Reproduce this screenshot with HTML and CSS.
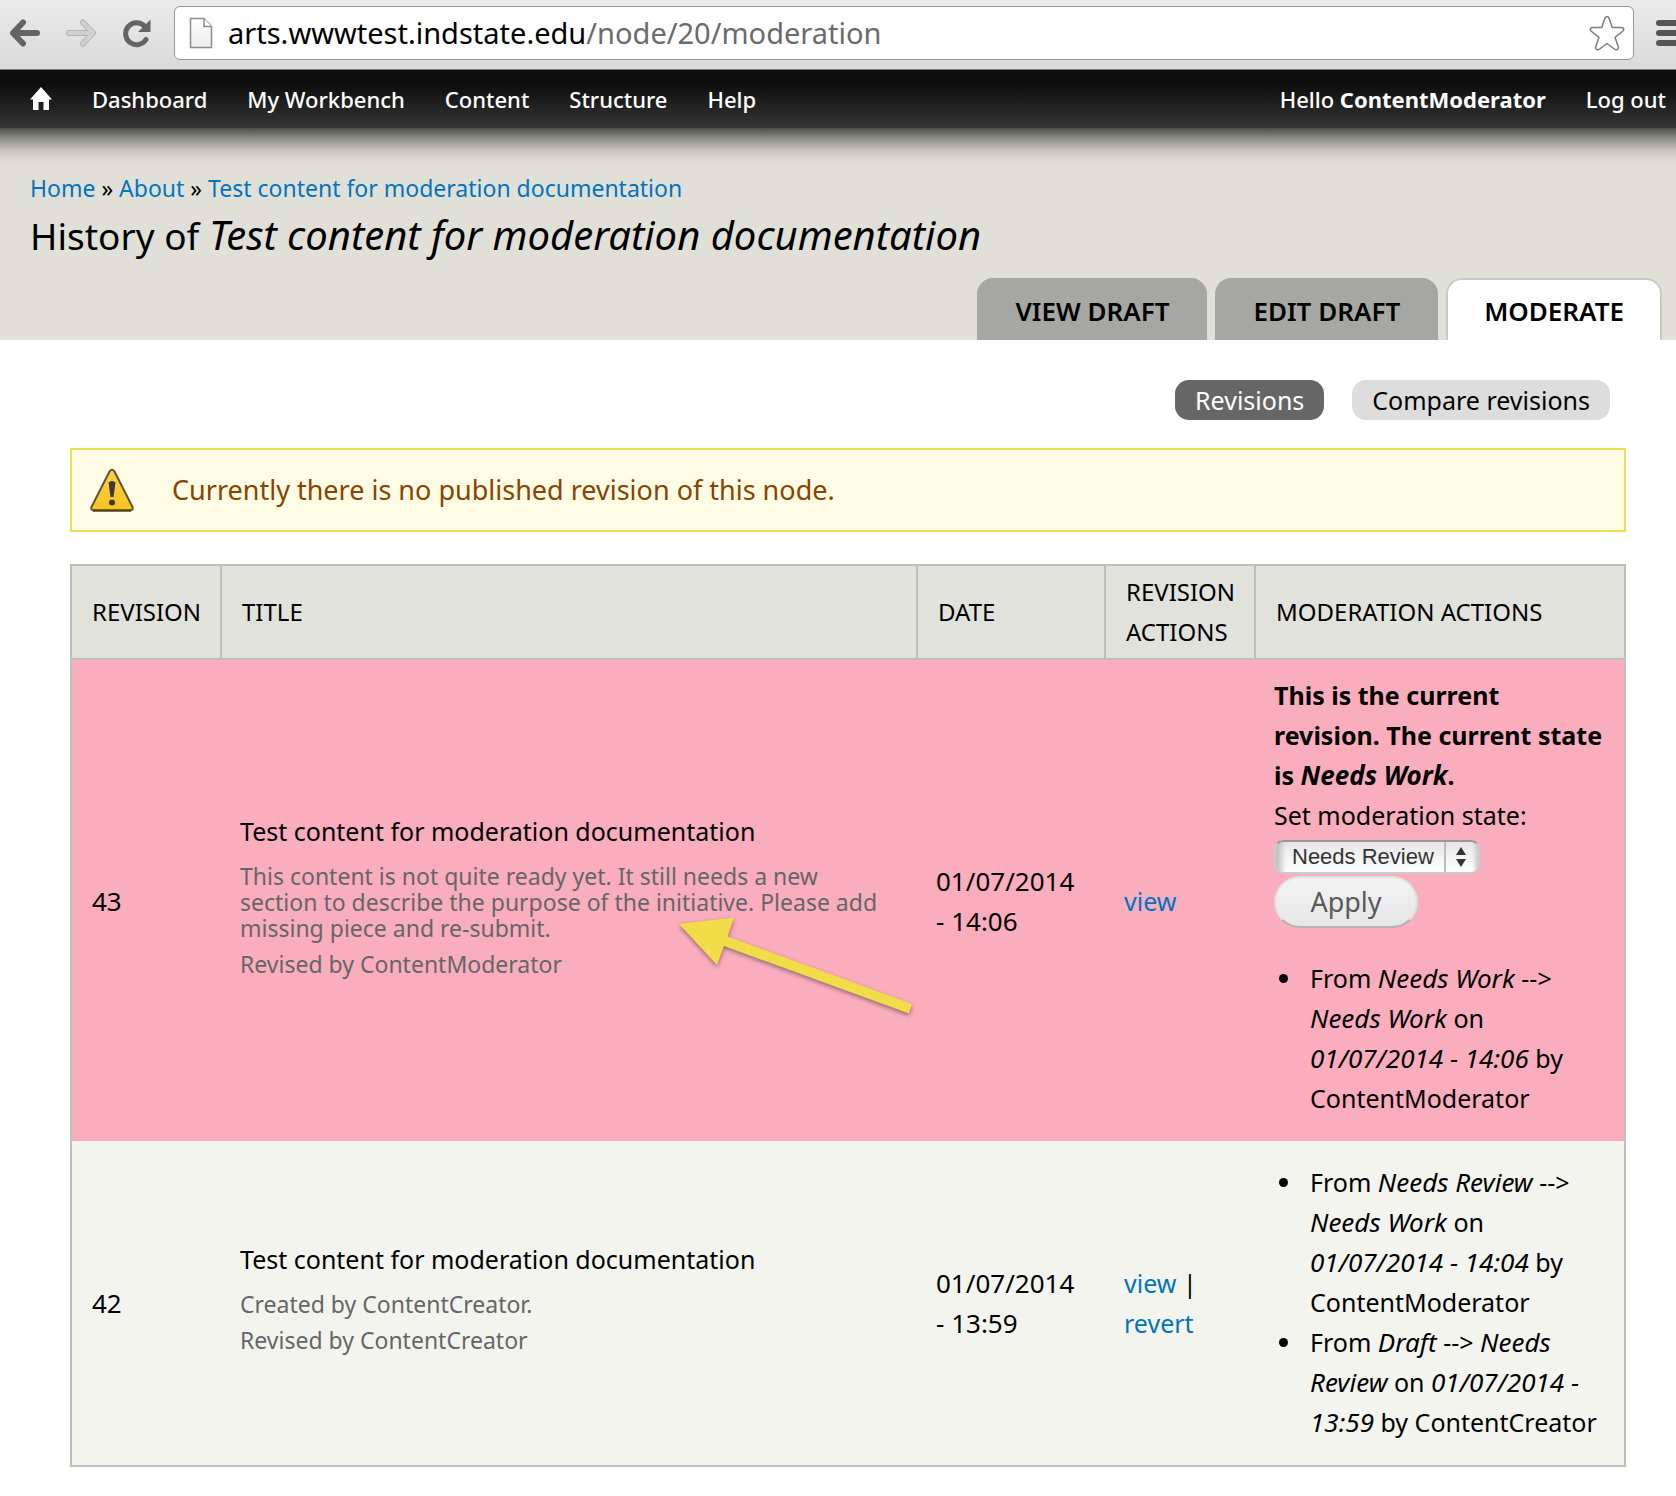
FILE: index.html
```html
<!DOCTYPE html>
<html lang="en">
<head>
<meta charset="utf-8">
<meta name="viewport" content="width=device-width, initial-scale=1">
<title>History of Test content for moderation documentation</title>
<link rel="stylesheet" href="styles.css">
</head>
<body>
<div class="browser">
  <button class="browser-btn" type="button" aria-label="Back">
    <svg width="32" height="30" viewBox="0 0 32 30" fill="none" stroke="#646464" stroke-width="6" stroke-linecap="round" stroke-linejoin="round"><path d="M28 15H6M14 4.500L4 15l10 10.500"/></svg>
  </button>
  <button class="browser-btn" type="button" aria-label="Forward" disabled>
    <svg width="32" height="30" viewBox="0 0 32 30" fill="none" stroke-linecap="round" stroke-linejoin="round"><path stroke="#b4b4b4" stroke-width="6" d="M4 15h22M18 4.500L28 15 18 25.500"/><path stroke="#d0d0d0" stroke-width="4" d="M4 15h22M18 4.500L28 15 18 25.500"/></svg>
  </button>
  <button class="browser-btn" type="button" aria-label="Reload">
    <svg width="32" height="30" viewBox="0 0 32 30"><path fill="none" stroke="#646464" stroke-width="5" stroke-linecap="round" d="M25 21.500A11 11 0 1 1 23.500 8"/><path fill="#646464" d="M29.500 1.500V14H17z"/></svg>
  </button>
  <div class="address">
    <svg width="24" height="32" viewBox="0 0 24 32" aria-hidden="true"><defs><linearGradient id="sheet" x1="0" y1="0" x2="0" y2="1"><stop offset="0" stop-color="#fff"/><stop offset="1" stop-color="#ececec"/></linearGradient></defs><path fill="url(#sheet)" stroke="#8c8c8c" stroke-width="1.500" d="M1.500 1.500H15L22.500 9.500V30.500H1.500z"/><path fill="#fff" stroke="#8c8c8c" stroke-width="1.500" d="M15 1.500V9.500H22.500"/></svg>
    <div class="url" role="textbox" contenteditable="true" spellcheck="false" aria-label="Address">arts.wwwtest.indstate.edu<span class="url-path">/node/20/moderation</span></div>
    <button class="browser-btn" type="button" aria-label="Bookmark this page">
      <svg width="36" height="36" viewBox="0 0 36 36" fill="#fff" stroke="#7d7d7d" stroke-width="1.500" stroke-linejoin="round"><path d="M16 3Q18 0 20 3L23.300 12.500H33Q36 13.500 34 16L26 22.300 29.500 32.500Q29 35.500 26 34.500L18 28.500 10 34.500Q7 35.500 6.500 32.500L10 22.300 2 16Q0 13.500 3 12.500H12.700z"/></svg>
    </button>
  </div>
  <button class="browser-btn menu-btn" type="button" aria-label="Menu">
    <svg width="34" height="28" viewBox="0 0 34 28" fill="#555"><rect width="34" height="6" y="1" rx="3"/><rect width="34" height="6" y="11" rx="3"/><rect width="34" height="6" y="21" rx="3"/></svg>
  </button>
</div>

<nav class="admin" aria-label="Administration">
  <ul class="admin-menu">
    <li><a href="#" aria-label="Home"><svg width="22" height="24" viewBox="0 0 22 24" fill="#fff"><path d="M11 0l11 12.500h-3V23h-5.500v-8h-5v8H3V12.500H0z"/></svg></a></li>
    <li><a href="#">Dashboard</a></li>
    <li><a href="#">My Workbench</a></li>
    <li><a href="#">Content</a></li>
    <li><a href="#">Structure</a></li>
    <li><a href="#">Help</a></li>
  </ul>
  <ul class="admin-menu">
    <li><a href="#">Hello <strong>ContentModerator</strong></a></li>
    <li><a href="#">Log out</a></li>
  </ul>
</nav>

<header class="branding">
  <div class="breadcrumb"><a href="#">Home</a> » <a href="#">About</a> » <a href="#">Test content for moderation documentation</a></div>
  <h1>History of <em>Test content for moderation documentation</em></h1>
  <ul class="tabs">
    <li><a href="#">VIEW DRAFT</a></li>
    <li><a href="#">EDIT DRAFT</a></li>
    <li><a class="active" href="#">MODERATE</a></li>
  </ul>
</header>

<main class="page">
  <ul class="pills">
    <li><a class="active" href="#">Revisions</a></li>
    <li><a href="#">Compare revisions</a></li>
  </ul>

  <div class="warning" role="status">
    <svg width="44" height="44" viewBox="0 0 44 44" aria-hidden="true"><defs><linearGradient id="sign" x1="0" y1="0" x2="0" y2="1"><stop offset="0" stop-color="#f7d04e"/><stop offset="1" stop-color="#fbc21c"/></linearGradient></defs><path fill="url(#sign)" stroke="#5f5638" stroke-width="2" stroke-linejoin="round" d="M19.500 3.500Q22 0 24.500 3.500L42.500 39Q43.500 42 40.500 42.500H3.500Q.5 42 1.500 39z"/><path stroke="#4b4217" stroke-width="2" d="M3 42.500h38"/><path fill="#3c3a2c" d="M18.500 14.500Q22 11.500 25.500 14.500L23.500 29h-3z"/><circle cx="22" cy="34.500" r="3" fill="#3c3a2c"/></svg>
    <span>Currently there is no published revision of this node.</span>
  </div>

  <table class="revisions">
    <colgroup><col class="col-id"><col><col class="col-date"><col class="col-actions"><col class="col-moderation"></colgroup>
    <thead>
      <tr><th scope="col">REVISION</th><th scope="col">TITLE</th><th scope="col">DATE</th><th scope="col">REVISION ACTIONS</th><th scope="col">MODERATION ACTIONS</th></tr>
    </thead>
    <tbody>
      <tr class="current">
        <td class="number">43</td>
        <td>
          <div class="entry">
            <div>Test content for moderation documentation</div>
            <p>This content is not quite ready yet. It still needs a new section to describe the purpose of the initiative. Please add missing piece and re-submit.</p>
            <p>Revised by ContentModerator</p>
            <svg class="pointer" width="240" height="104" viewBox="0 0 240 104" aria-hidden="true"><path fill="#f2dd48" d="M3 9L58 2.500 51.500 21.500 236 89 233 98.500 48 31 41 50z"/></svg>
          </div>
        </td>
        <td class="date">01/07/2014 <span class="time">- 14:06</span></td>
        <td><a href="#">view</a></td>
        <td>
          <strong>This is the current revision. The current state is <em>Needs Work</em>.</strong>
          <form class="state-form">
            <label for="state">Set moderation state:</label>
            <span class="select">
              <select id="state"><option>Needs Review</option><option>Draft</option><option>Published</option></select>
              <svg width="36" height="34" viewBox="0 0 36 34" aria-hidden="true"><path stroke="#bdbdbd" stroke-width="2" d="M1 2v30"/><path fill="#333" d="M12 15l5-8 5 8zM12 19l5 8 5-8z"/></svg>
            </span>
            <button class="apply" type="button">Apply</button>
          </form>
          <ul class="log">
            <li>From <em>Needs Work</em> --&gt; <em>Needs Work</em> on <em>01/07/2014 - 14:06</em> by ContentModerator</li>
          </ul>
        </td>
      </tr>
      <tr>
        <td class="number">42</td>
        <td>
          <div class="entry">
            <div>Test content for moderation documentation</div>
            <p>Created by ContentCreator.</p>
            <p>Revised by ContentCreator</p>
          </div>
        </td>
        <td class="date">01/07/2014 <span class="time">- 13:59</span></td>
        <td><a href="#">view</a> | <a href="#">revert</a></td>
        <td>
          <ul class="log">
            <li>From <em>Needs Review</em> --&gt; <em>Needs Work</em> on <em>01/07/2014 - 14:04</em> by ContentModerator</li>
            <li>From <em>Draft</em> --&gt; <em>Needs Review</em> on <em>01/07/2014 - 13:59</em> by ContentCreator</li>
          </ul>
        </td>
      </tr>
    </tbody>
  </table>
</main>
</body>
</html>
```
FILE: styles.css
```css
* {
  box-sizing: border-box;
}

body {
  margin: 0;
  overflow-x: hidden;
  background: #fff;
  color: #000;
  font: 25px/40px "Noto Sans", "Open Sans", sans-serif;
}

ul {
  margin: 0;
  padding: 0;
}

a {
  color: #0074bd;
  text-decoration: none;
}

svg {
  display: block;
  flex: none;
}

/* Browser toolbar */
.browser {
  display: flex;
  align-items: center;
  gap: 24px;
  height: 70px;
  padding: 0 0 4px 9px;
  overflow: hidden;
  background: linear-gradient(#ebebeb, #dadada);
  border-bottom: 1px solid #777;
}

.browser-btn {
  flex: none;
  padding: 0;
  border: 0;
  background: none;
}

.address {
  display: flex;
  flex: 1;
  align-items: center;
  gap: 15px;
  height: 54px;
  margin-right: -2px;
  margin-left: -3px;
  padding: 0 8px 0 14px;
  background: #fff;
  border: 1px solid #999;
  border-radius: 6px;
}

.url {
  flex: 1;
  font-size: 29px;
  white-space: nowrap;
}

.url-path {
  color: #6b6b6b;
}

.menu-btn {
  width: 20px;
}

/* Administration bar */
.admin {
  display: flex;
  align-items: center;
  justify-content: space-between;
  height: 58px;
  padding: 0 10px 0 30px;
  background: linear-gradient(#0e0e0e 25%, #353535);
  font-size: 22px;
}

.admin-menu {
  display: flex;
  align-items: center;
  gap: 40px;
  font-weight: 500;
  list-style: none;
}

.admin-menu a {
  color: #fff;
}

/* Page header */
.branding {
  padding: 40px 14px 0 30px;
  background: linear-gradient(#4d4d48, #8b8b85 10px, #c4c4bc 22px, #dcdcd4 32px, #e0e0d8 44px);
}

.breadcrumb {
  font-size: 23px;
}

h1 {
  margin: 4px 0 18px;
  font-size: 37px;
  font-weight: 400;
  line-height: 48px;
}

h1 em {
  font-size: 40px;
  line-height: 40px;
}

.tabs {
  display: flex;
  justify-content: flex-end;
  gap: 8px;
  list-style: none;
}

.tabs a {
  display: block;
  height: 62px;
  padding: 0 38px;
  background: #a6a7a2;
  border-radius: 16px 16px 0 0;
  color: #000;
  font-size: 26px;
  font-weight: 600;
  line-height: 66px;
}

.tabs .active {
  padding: 0 36px;
  background: #fff;
  border: 2px solid #c9cac4;
  border-bottom: 0;
  line-height: 62px;
}

/* Content */
.page {
  padding: 40px 50px 30px 70px;
}

.pills {
  display: flex;
  justify-content: flex-end;
  gap: 28px;
  margin-right: 16px;
  list-style: none;
}

.pills a {
  display: block;
  padding: 0 20px;
  background: #ddd;
  border-radius: 14px;
  color: #000;
}

.pills .active {
  background: #666;
  color: #fff;
}

.warning {
  display: flex;
  align-items: center;
  gap: 38px;
  margin: 28px 0 32px;
  padding: 18px;
  background: #fffce5;
  border: 2px solid #ed5;
  color: #840;
  font-size: 27px;
}

.revisions {
  width: 100%;
  table-layout: fixed;
  border: 2px solid #bebfb9;
  border-spacing: 0;
  background: #f3f4ee;
}

.col-id,
.col-actions {
  width: 150px;
}

.col-date {
  width: 188px;
}

.col-moderation {
  width: 368px;
}

th {
  padding: 6px 18px 6px 20px;
  background: #e1e2dc;
  border-right: 2px solid #bebfb9;
  border-bottom: 2px solid #bebfb9;
  font-size: 24px;
  font-weight: 400;
  text-align: left;
}

th:last-child {
  border-right: 0;
}

td {
  padding: 15px 18px;
}

td em {
  font-size: 26px;
  line-height: 26px;
}

.number {
  padding-left: 20px;
  font-size: 26px;
}

.date {
  font-size: 26px;
}

.time {
  white-space: nowrap;
}

.current {
  background: #f9adbd;
}

.entry {
  position: relative;
  padding-bottom: 14px;
}

.entry p {
  margin: 10px 0 0;
  color: #666;
  font-size: 23px;
  line-height: 26px;
}

.entry div + p {
  margin-top: 12px;
}

.pointer {
  position: absolute;
  top: 104px;
  left: 436px;
  filter: drop-shadow(0 2px 2px rgba(0, 0, 0, .4));
}

.state-form {
  display: flex;
  flex-direction: column;
  align-items: flex-start;
  gap: 2px;
  margin-bottom: 30px;
}

.select {
  position: relative;
  margin-top: 3px;
}

.select svg {
  position: absolute;
  top: 0;
  right: 0;
  pointer-events: none;
}

select {
  display: block;
  height: 34px;
  width: 206px;
  padding: 0 34px 0 16px;
  appearance: none;
  background: linear-gradient(90deg, #bbb, transparent 10px, transparent 196px, #ccc), linear-gradient(#e6e6e6, #fff);
  border: 2px solid #ccc;
  border-top-color: #999;
  border-radius: 9px;
  color: #333;
  font: 22px/28px "Liberation Sans", Arial, sans-serif;
}

.apply {
  height: 52px;
  width: 144px;
  padding: 0;
  background: linear-gradient(#f3f3f3, #e6e6e6);
  border: 2px solid #e0e0e0;
  border-bottom-color: #b4b4b4;
  border-radius: 26px;
  color: #5a5a5a;
  font: inherit;
  font-size: 27px;
}

.log {
  margin: 6px 0 8px;
  padding-left: 30px;
}

.log li {
  padding-left: 6px;
}
```
